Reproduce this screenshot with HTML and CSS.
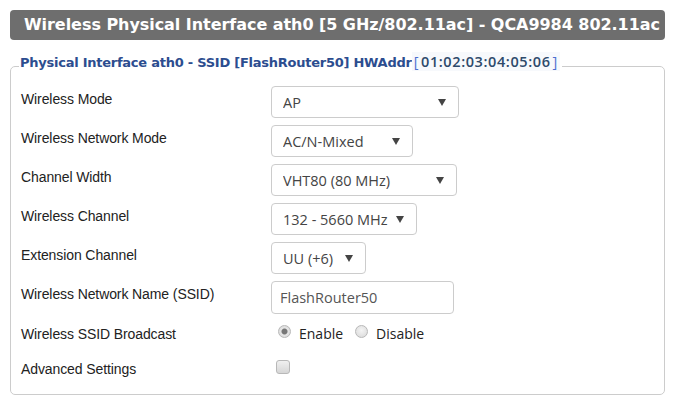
FILE: index.html
```html
<!DOCTYPE html>
<html>
<head>
	<meta charset="utf-8">
	<title>Wireless</title>
	<link rel="stylesheet" href="styles.css">
</head>
<body>
	<div class="wrapper">
		<h2 class="title">Wireless Physical Interface ath0 [5 GHz/802.11ac] - QCA9984 802.11ac</h2>
		<fieldset class="panel">
			<legend>Physical Interface ath0 - SSID [FlashRouter50] HWAddr<span class="hw"><b>[</b>01:02:03:04:05:06<b>]</b></span></legend>
			<div class="rows">
				<label>Wireless Mode</label>
				<div class="select" style="width:188px"><select><option>AP</option></select></div>

				<label>Wireless Network Mode</label>
				<div class="select" style="width:142px"><select><option>AC/N-Mixed</option></select></div>

				<label>Channel Width</label>
				<div class="select" style="width:186px"><select><option>VHT80 (80 MHz)</option></select></div>

				<label>Wireless Channel</label>
				<div class="select" style="width:146px"><select><option>132 - 5660 MHz</option></select></div>

				<label>Extension Channel</label>
				<div class="select" style="width:95px"><select><option>UU (+6)</option></select></div>

				<label>Wireless Network Name (SSID)</label>
				<div><input type="text" class="text" value="FlashRouter50"></div>

				<label>Wireless SSID Broadcast</label>
				<div class="radios">
					<label class="opt"><input type="radio" name="bc" checked> Enable</label>
					<label class="opt"><input type="radio" name="bc"> Disable</label>
				</div>

				<label class="last">Advanced Settings</label>
				<div class="last"><input type="checkbox" class="check"></div>
			</div>
		</fieldset>
	</div>
</body>
</html>
```

FILE: styles.css
```css
*{
	box-sizing: border-box;
	margin: 0;
	padding: 0;
}
body{
	background: #ffffff;
	font-family: "Liberation Sans", Arial, sans-serif;
	font-size: 14px;
	color: #222222;
}
.wrapper{
	padding: 10px 12px 0 10px;
}
.title{
	height: 30px;
	background: #6e6e6e;
	border-radius: 4px;
	color: #ffffff;
	font-family: "DejaVu Sans", Verdana, sans-serif;
	font-size: 16px;
	font-weight: bold;
	line-height: 30px;
	padding-left: 14px;
	white-space: nowrap;
	letter-spacing: -0.05px;
}
.panel{
	margin-top: 12px;
	border: 1px solid #cccccc;
	border-radius: 5px;
	padding: 5px 10px 10px 10px;
	height: 343px;
}
.panel legend{
	margin-left: -2px;
	padding: 0 2px 10px 1px;
	color: #2c4d8f;
	font-family: "DejaVu Sans", Verdana, sans-serif;
	font-size: 13px;
	font-weight: bold;
	letter-spacing: -0.25px;
}
.hw{
	font-family: "Open Sans", sans-serif;
	font-weight: 600;
	color: #2e4a6b;
	font-size: 14.5px;
	letter-spacing: 0.6px;
	background: #f7f9fc;
}
.hw b{
	color: #4a6fd0;
	font-weight: normal;
	padding: 0 2px;
}
.rows{
	display: grid;
	grid-template-columns: 250px auto;
	row-gap: 7px;
	align-items: center;
}
.rows > label{
	align-self: start;
	padding-top: 5px;
	letter-spacing: -0.1px;
}
.rows > .last{
	margin-top: 4px;
}
.select{
	position: relative;
	height: 32px;
}
.select select{
	appearance: none;
	-webkit-appearance: none;
	width: 100%;
	height: 32px;
	border: 1px solid #cccccc;
	border-radius: 4px;
	background: #ffffff;
	font-family: "Open Sans", sans-serif;
	font-size: 14.5px;
	color: #444444;
	padding: 0 0 0 11px;
	outline: none;
}
.select::after{
	content: "";
	position: absolute;
	right: 13px;
	top: 13px;
	border-left: 4px solid transparent;
	border-right: 4px solid transparent;
	border-top: 7px solid #444444;
	pointer-events: none;
}
.text{
	width: 183px;
	height: 33px;
	border: 1px solid #cccccc;
	border-radius: 4px;
	font-family: "Open Sans", sans-serif;
	font-size: 14.5px;
	color: #555555;
	padding: 0 0 0 8px;
	outline: none;
}
.radios{
	display: flex;
	gap: 12px;
	padding-left: 7px;
	height: 24px;
	align-items: center;
}
.opt{
	display: flex;
	align-items: center;
	gap: 8px;
	font-family: "Open Sans", sans-serif;
	font-size: 14px;
	color: #222222;
}
.opt input{
	appearance: none;
	-webkit-appearance: none;
	width: 13px;
	height: 13px;
	border: 1px solid #b8b8b8;
	border-radius: 50%;
	background: radial-gradient(circle at 50% 40%, #f4f4f4, #d8d8d8);
	position: relative;
	top: -2px;
}
.opt input:checked{
	background: radial-gradient(circle, #777777 0 2.5px, #e6e6e6 3.5px, #d4d4d4);
}
.check{
	appearance: none;
	-webkit-appearance: none;
	width: 14px;
	height: 14px;
	border: 1px solid #b8b8b8;
	border-radius: 3px;
	background: linear-gradient(#f0f0f0, #d6d6d6);
	margin-left: 5px;
	display: block;
}
```
